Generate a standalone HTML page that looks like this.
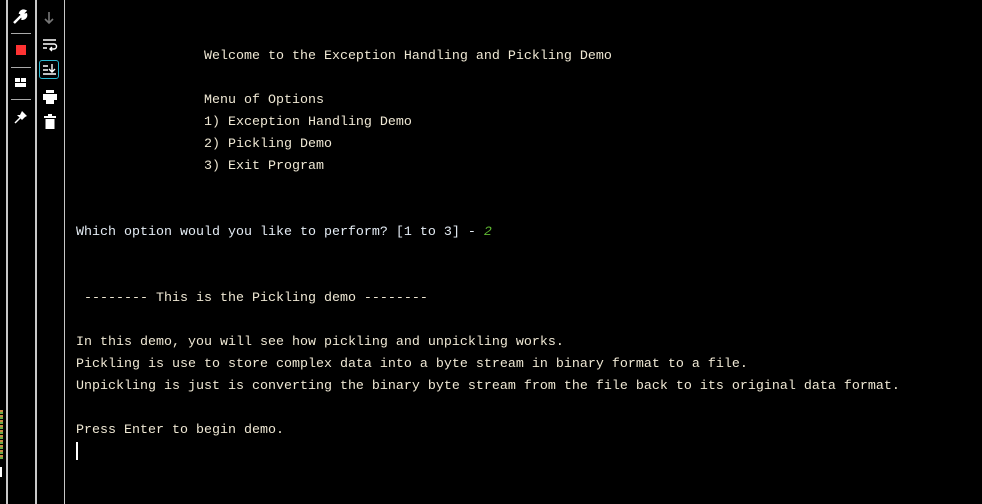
<!DOCTYPE html>
<html><head><style>
body{margin:0;width:982px;height:504px;background:#000;overflow:hidden;position:relative;font-family:"Liberation Mono",monospace;}
.v{position:absolute;top:0;width:2px;height:504px;background:#c8c8c8;}
pre{position:absolute;left:76px;top:46px;margin:0;font-family:"Liberation Mono",monospace;font-size:13.33px;line-height:22px;color:#efe8d4;}
.b{color:#e4ecf4}.g{color:#5fb832;font-style:italic}
.ic{position:absolute;}
</style></head><body>
<div class="v" style="left:6px"></div>
<div class="v" style="left:35px"></div>
<div class="v" style="left:64px;width:1px"></div>
<svg class="ic" style="left:12px;top:9px" width="16" height="16" viewBox="0 0 16 16"><path d="M2 14 L9 7 M8 5 a3.5 3.5 0 0 1 5 -3 l-2 2 1 2 2 -0.5 a3.5 3.5 0 0 1 -4.5 4" stroke="#fff" stroke-width="2.5" fill="#fff"/></svg>
<div class="ic" style="left:11px;top:33px;width:20px;height:1px;background:#aaa"></div>
<div class="ic" style="left:16px;top:45px;width:10px;height:10px;background:#f33"></div>
<div class="ic" style="left:11px;top:67px;width:20px;height:1px;background:#aaa"></div>
<div class="ic" style="left:15px;top:78px;width:5px;height:4px;background:#fff"></div>
<div class="ic" style="left:21px;top:78px;width:5px;height:4px;background:#fff"></div>
<div class="ic" style="left:15px;top:83px;width:11px;height:4px;background:#fff"></div>
<div class="ic" style="left:11px;top:99px;width:20px;height:1px;background:#aaa"></div>
<svg class="ic" style="left:13px;top:109px" width="16" height="16" viewBox="0 0 16 16"><path d="M2 14 L7 9" stroke="#fff" stroke-width="1.5"/><path d="M9 2 L14 7 L12 8 L9 11 L8 10 L5 7 L4 6 L7 6 Z" fill="#fff"/></svg>
<svg class="ic" style="left:42px;top:11px" width="14" height="14" viewBox="0 0 14 14"><path d="M7 1 V12 M3 8 L7 12 L11 8" stroke="#777" stroke-width="1.6" fill="none"/></svg>
<svg class="ic" style="left:42px;top:38px" width="16" height="14" viewBox="0 0 16 14"><path d="M1 2 H14 M1 6 H12 a2.5 2.5 0 0 1 0 5 H8 M1 10 H5 M10 9 L8 11 L10 13" stroke="#fff" stroke-width="1.4" fill="none"/></svg>
<div class="ic" style="left:39px;top:60px;width:20px;height:19px;border:1px solid #2bb8d0;border-radius:3px;box-sizing:border-box"></div>
<svg class="ic" style="left:42px;top:63px" width="15" height="14" viewBox="0 0 15 14"><path d="M1 3 H6 M1 7 H6 M1 11 H14 M10 1 V8 M7 6 L10 9 L13 6" stroke="#fff" stroke-width="1.4" fill="none"/></svg>
<svg class="ic" style="left:42px;top:90px" width="16" height="15" viewBox="0 0 16 15"><rect x="4" y="0" width="8" height="3" fill="#fff"/><rect x="1" y="4" width="14" height="6" fill="#fff"/><rect x="4" y="9" width="8" height="5" fill="#fff"/></svg>
<svg class="ic" style="left:44px;top:114px" width="12" height="15" viewBox="0 0 12 15"><rect x="0" y="2" width="12" height="2" fill="#fff"/><rect x="4" y="0" width="4" height="2" fill="#fff"/><rect x="1.5" y="5" width="9" height="10" fill="#fff"/></svg>
<div class="ic" style="left:0;top:410px;width:3px;height:50px;background:repeating-linear-gradient(#c84 0 2px,#6a4 2px 4px,#000 4px 5px)"></div>
<div class="ic" style="left:0;top:467px;width:2px;height:10px;background:#fff"></div>
<pre>                Welcome to the Exception Handling and Pickling Demo

                Menu of Options
                1) Exception Handling Demo
                2) Pickling Demo
                3) Exit Program


<span class="b">Which option would you like to perform? [1 to 3] - </span><span class="g">2</span>


 -------- This is the Pickling demo --------

In this demo, you will see how pickling and unpickling works.
Pickling is use to store complex data into a byte stream in binary format to a file.
Unpickling is just is converting the binary byte stream from the file back to its original data format.

Press Enter to begin demo.</pre>
<div class="ic" style="left:76px;top:442px;width:2px;height:18px;background:#fff"></div>
</body></html>
